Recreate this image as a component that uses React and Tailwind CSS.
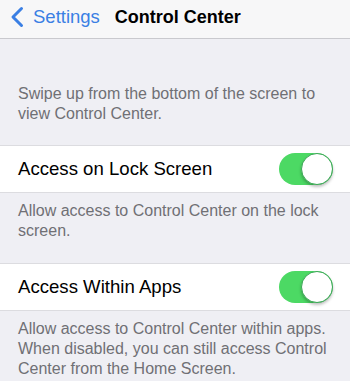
import React from 'react';

function Toggle() {
  return (
    <div className="relative w-[54px] h-[32px] rounded-full bg-[#4cd964]">
      <div className="absolute right-0 top-0 w-[32px] h-[32px] rounded-full bg-white border border-[#3aa855] shadow-[0_2px_3px_rgba(0,0,0,0.25)]" />
    </div>
  );
}

function Row({ label }) {
  return (
    <div className="h-[48px] bg-white border-y border-[#dcdce0] flex items-center justify-between pl-[18px] pr-[17px]">
      <span className="text-[18.6px] text-black">{label}</span>
      <Toggle />
    </div>
  );
}

function Note({ children }) {
  return (
    <p className="px-[18px] pt-[8px] pb-[22px] text-[16px] leading-[20px] text-[#707075]">
      {children}
    </p>
  );
}

export default function App() {
  return (
    <div className="w-[350px] h-[381px] overflow-hidden bg-[#efeff4] font-['Liberation_Sans',Arial,sans-serif]">
      <div className="h-[39px] bg-[#f7f7f8] border-b border-[#c9c9ce] flex items-center">
        <svg width="16" height="22" viewBox="0 0 16 22" className="ml-[9px] mb-[4px]">
          <path d="M12.5 2.5 L4 11 L12.5 19.5" fill="none" stroke="#3a7fe4" strokeWidth="3" strokeLinecap="round" strokeLinejoin="round" />
        </svg>
        <span className="ml-[8px] mb-[4px] text-[18.5px] text-[#3a7fe4]">Settings</span>
        <span className="ml-[15px] mb-[4px] text-[18px] font-bold text-black">Control Center</span>
      </div>
      <p className="px-[18px] pt-[45px] pb-[21px] text-[16px] leading-[20px] text-[#707075]">
        Swipe up from the bottom of the screen to view Control Center.
      </p>
      <Row label="Access on Lock Screen" />
      <Note>Allow access to Control Center on the lock screen.</Note>
      <Row label="Access Within Apps" />
      <Note>
        Allow access to Control Center within apps. When disabled, you can still access Control Center from the Home Screen.
      </Note>
    </div>
  );
}
